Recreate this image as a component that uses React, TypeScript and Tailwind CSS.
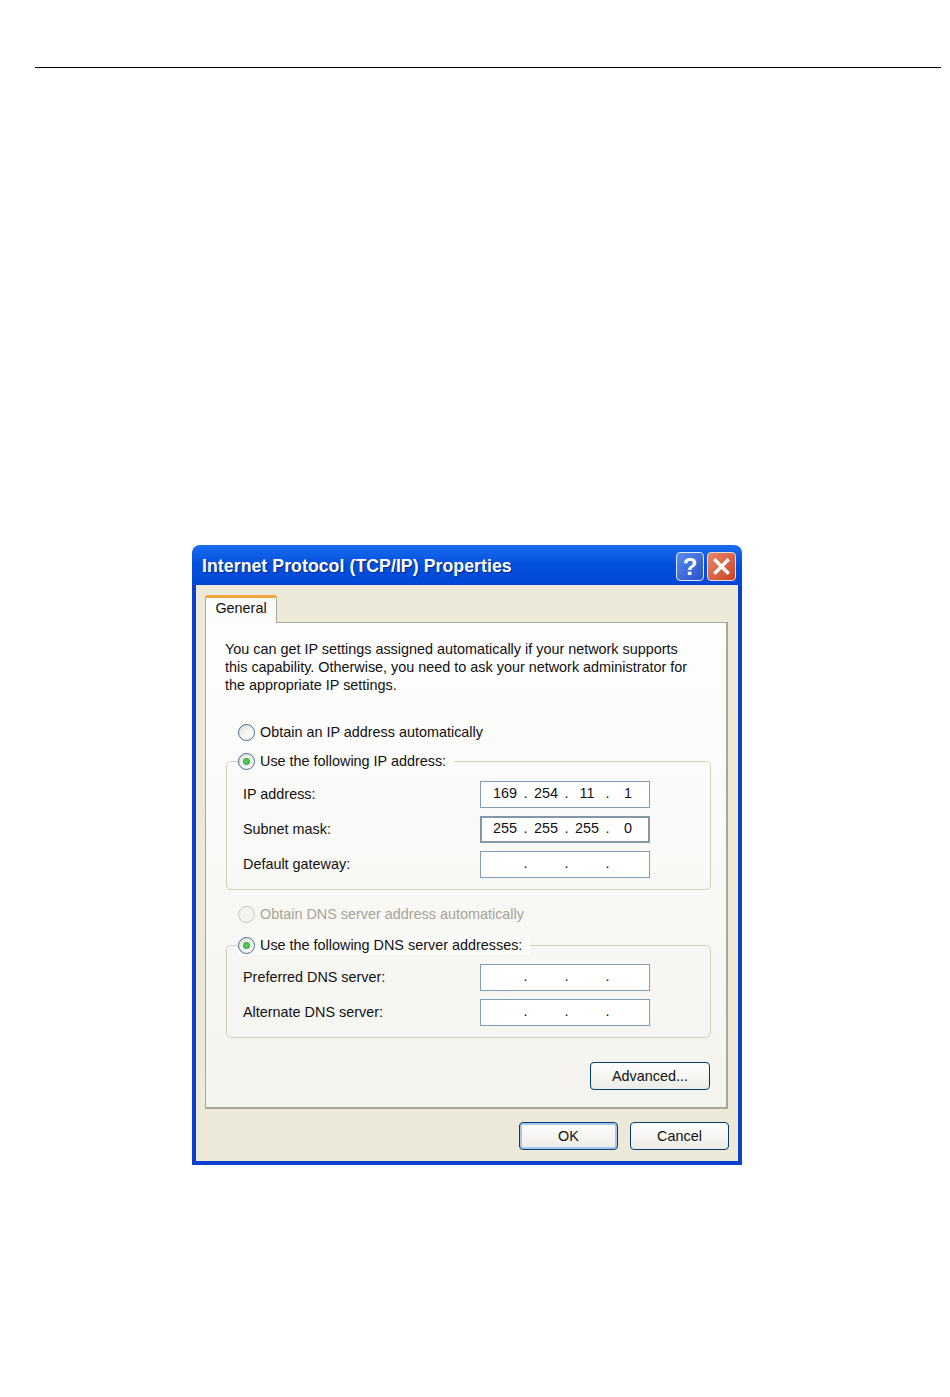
const ui = { fontFamily: '"Liberation Sans", Arial, sans-serif' };

function Radio({ checked = false, disabled = false }: { checked?: boolean; disabled?: boolean }) {
  return (
    <span
      className={`w-[17px] h-[17px] shrink-0 rounded-full border flex items-center justify-center ${
        disabled
          ? "border-[#c9c7ba] bg-[#f4f3ee]"
          : "border-[#3f6b8c] bg-gradient-to-br from-[#dcdcd5] via-[#f5f5f2] to-white"
      }`}
    >
      {checked && <span className="w-[7px] h-[7px] rounded-full bg-[radial-gradient(circle,#5fd068,#24a33a)]" />}
    </span>
  );
}

function IpField({ label, values, focus = false }: { label: string; values?: string[]; focus?: boolean }) {
  const parts = values ?? ["", "", "", ""];
  return (
    <div className="flex items-center h-[27px]">
      <span className="w-[237px] text-[14.4px] text-[#111]">{label}</span>
      <div
        className={`w-[170px] h-full bg-white flex items-center pb-px text-[14.4px] text-[#111] ${
          focus ? "pl-[7px] border-2 border-[#8397a8]" : "pl-[8px] border border-[#7f9db9]"
        }`}
      >
        {parts.map((part, i) => (
          <div key={i} className="flex items-center">
            <span className="w-[32px] text-center">{part}</span>
            {i < 3 && <span className="w-[9px] text-center">.</span>}
          </div>
        ))}
      </div>
    </div>
  );
}

function GroupBox({ title, height, children }: { title: string; height: string; children: React.ReactNode }) {
  return (
    <div className={`ml-[20px] w-[485px] border border-[#d0d0bf] rounded-[5px] ${height}`}>
      <div className="flex -mt-[10px] ml-[11px]">
        <div className="flex items-center gap-[5px] h-[19px] pr-[8px] bg-[#fbfbf9] text-[14.4px] text-[#111]">
          <Radio checked />
          <span>{title}</span>
        </div>
      </div>
      {children}
    </div>
  );
}

function XpButton({ label, width, isDefault = false }: { label: string; width: string; isDefault?: boolean }) {
  return (
    <button
      type="button"
      className={`${width} h-[28px] pt-px rounded-[4px] border border-[#003c74] bg-gradient-to-b from-white to-[#ecebe5] text-[14.4px] text-[#111] ${
        isDefault ? "shadow-[inset_0_0_0_2px_#a9c4ee]" : ""
      }`}
    >
      {label}
    </button>
  );
}

export default function App() {
  return (
    <div className="w-[950px] h-[1397px] bg-white overflow-hidden" style={ui}>
      <div className="pt-[67px] pl-[35px]">
        <div className="w-[906px] h-px bg-black" />
      </div>

      {/* Dialog window */}
      <div className="ml-[192px] mt-[477px] w-[550px] h-[620px] flex flex-col rounded-t-[8px] overflow-hidden">
        <div className="h-[40px] shrink-0 flex items-center pt-[3px] pl-[10px] pr-[6px] bg-gradient-to-b from-[#1a6cf0] via-[#0450dc] to-[#0346d6]">
          <span className="text-white font-bold text-[17.6px] tracking-[0.1px] [text-shadow:1px_1px_1px_#0a2a8c]">
            Internet Protocol (TCP/IP) Properties
          </span>
          <div className="ml-auto flex gap-[3px]">
            <div className="w-[28px] h-[29px] rounded-[4px] border border-[#dfe8f8] bg-gradient-to-br from-[#5b8bee] to-[#2a52c8] flex items-center justify-center text-white font-bold text-[24px] leading-none">
              ?
            </div>
            <div className="w-[29px] h-[29px] rounded-[4px] border border-[#f0dcd6] bg-gradient-to-br from-[#e8866a] to-[#c9421f] flex items-center justify-center">
              <svg width="19" height="19" viewBox="0 0 19 19" fill="none" stroke="white" strokeWidth="3.4" strokeLinecap="square">
                <line x1="3.5" y1="3.5" x2="15.5" y2="15.5" />
                <line x1="15.5" y1="3.5" x2="3.5" y2="15.5" />
              </svg>
            </div>
          </div>
        </div>

        <div className="flex-1 border-x-[4px] border-b-[4px] border-[#0a3fd0] bg-[#ece9d8] pl-[9px] pr-[11px] pt-[10px]">
          {/* Tab */}
          <div className="w-[72px] h-[28px] bg-[#fcfcfa] border-x border-[#a8a798] border-t-[3px] border-t-[#f2a73c] rounded-t-[3px] relative z-10 -mb-px text-[14.4px] text-[#111] text-center leading-[21px]">
            General
          </div>

          {/* Tab panel */}
          <div className="w-[523px] h-[487px] border border-[#a8a798] border-r-2 border-b-2 bg-gradient-to-b from-[#fefefe] to-[#f4f3ee] pt-[17px]">
            <p className="ml-[19px] text-[14.4px] leading-[18px] text-[#111] whitespace-nowrap">
              You can get IP settings assigned automatically if your network supports
              <br />
              this capability. Otherwise, you need to ask your network administrator for
              <br />
              the appropriate IP settings.
            </p>

            <div className="ml-[32px] mt-[29px] flex items-center gap-[5px] h-[19px] text-[14.4px] text-[#111]">
              <Radio />
              <span>Obtain an IP address automatically</span>
            </div>

            <div className="mt-[19px]">
              <GroupBox title="Use the following IP address:" height="h-[129px]">
                <div className="flex flex-col gap-[8px] pl-[16px] mt-[10px]">
                  <IpField label="IP address:" values={["169", "254", "11", "1"]} />
                  <IpField label="Subnet mask:" values={["255", "255", "255", "0"]} focus />
                  <IpField label="Default gateway:" />
                </div>
              </GroupBox>
            </div>

            <div className="ml-[32px] mt-[15px] flex items-center gap-[5px] h-[19px] text-[14.4px] text-[#a5a497]">
              <Radio disabled />
              <span>Obtain DNS server address automatically</span>
            </div>

            <div className="mt-[21px]">
              <GroupBox title="Use the following DNS server addresses:" height="h-[93px]">
                <div className="flex flex-col gap-[8px] pl-[16px] mt-[9px]">
                  <IpField label="Preferred DNS server:" />
                  <IpField label="Alternate DNS server:" />
                </div>
              </GroupBox>
            </div>

            <div className="flex justify-end pr-[16px] mt-[24px]">
              <XpButton label="Advanced..." width="w-[120px]" />
            </div>
          </div>

          <div className="flex justify-end gap-[12px] mt-[13px] -mr-[2px]">
            <XpButton label="OK" width="w-[99px]" isDefault />
            <XpButton label="Cancel" width="w-[99px]" />
          </div>
        </div>
      </div>
    </div>
  );
}
